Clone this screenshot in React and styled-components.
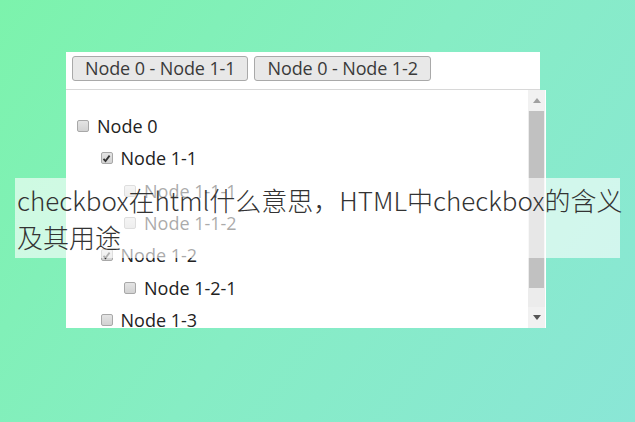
import React from 'react'
import styled, { createGlobalStyle } from 'styled-components'

const GlobalStyle = createGlobalStyle`
  html, body {
    margin: 0;
    padding: 0;
  }
  body {
    width: 635px;
    height: 422px;
    overflow: hidden;
    background: linear-gradient(125deg, #7cf3ac 0%, #86edc4 50%, #8ae6d6 100%);
    font-family: "Open Sans", "Noto Sans", sans-serif;
  }
`

const Page = styled.div`
  position: relative;
  height: 422px;
  padding: 52px 0 0 66px;
  box-sizing: border-box;
`

const Panel = styled.div`
  display: flex;
  flex-direction: column;
  width: 480px;
`

const TagBar = styled.div`
  display: flex;
  align-items: center;
  gap: 6px;
  width: 474px;
  height: 38px;
  padding: 0 6px;
  box-sizing: border-box;
  background: #fff;
  border-bottom: 1px solid #d8d8d8;
`

const Tag = styled.button`
  height: 25px;
  padding: 0 12px;
  margin-top: -4px;
  font-family: "Open Sans", "Noto Sans", sans-serif;
  font-size: 18px;
  color: #3a3a3a;
  background: #e8e8e8;
  border: 1px solid #a9a9a9;
  border-radius: 3px;
  line-height: 23px;
  letter-spacing: -0.1px;
`

const ListBox = styled.div`
  display: flex;
  height: 238px;
  background: #fff;
  overflow: hidden;
`

const Tree = styled.ul`
  flex: 1;
  list-style: none;
  margin: 0;
  padding: 20px 0 0 0;
`

const Row = styled.li`
  display: flex;
  align-items: center;
  height: 32.3px;
  padding-left: ${p => 11 + p.$level * 23.5}px;
  font-size: 18px;
  color: #222;
`

const Box = styled.span`
  display: inline-flex;
  align-items: center;
  justify-content: center;
  width: 10px;
  height: 10px;
  margin-right: 8px;
  border: 1px solid #a8a8a8;
  border-radius: 2px;
  background: linear-gradient(#e4e4e4, #d2d2d2);
`

const Scrollbar = styled.div`
  display: flex;
  flex-direction: column;
  width: 17px;
  margin-right: 1px;
  background: #ececec;
`

const Arrow = styled.div`
  display: flex;
  align-items: center;
  justify-content: center;
  height: 21px;
  background: #f1f1f1;
`

const Thumb = styled.div`
  height: 177px;
  margin: 0 1px;
  background: #c1c1c1;
`

const Track = styled.div`
  flex: 1;
`

const Caption = styled.div`
  position: absolute;
  left: 15px;
  top: 178px;
  width: 605px;
  height: 80px;
  padding: 3px 2px;
  box-sizing: border-box;
  background: rgba(255, 255, 255, 0.62);
  font-family: "Noto Sans CJK SC", "Noto Sans", sans-serif;
  font-size: 26px;
  font-weight: 300;
  line-height: 37px;
  color: #333;
  letter-spacing: 0;
  white-space: nowrap;
`

const nodes = [
  { label: 'Node 0', level: 0 },
  { label: 'Node 1-1', level: 1, checked: true },
  { label: 'Node 1-1-1', level: 2 },
  { label: 'Node 1-1-2', level: 2 },
  { label: 'Node 1-2', level: 1, checked: true },
  { label: 'Node 1-2-1', level: 2 },
  { label: 'Node 1-3', level: 1 }
]

function Checkbox({ checked }) {
  return (
    <Box>
      {checked && (
        <svg width="9" height="9" viewBox="0 0 9 9">
          <path d="M1.5 4.8 L3.5 7 L7.6 1.6" fill="none" stroke="#333" strokeWidth="1.8" />
        </svg>
      )}
    </Box>
  )
}

export default function App() {
  return (
    <>
      <GlobalStyle />
      <Page>
        <Panel>
          <TagBar>
            <Tag>Node 0 - Node 1-1</Tag>
            <Tag>Node 0 - Node 1-2</Tag>
          </TagBar>
          <ListBox>
            <Tree>
              {nodes.map(n => (
                <Row key={n.label} $level={n.level}>
                  <Checkbox checked={n.checked} />
                  {n.label}
                </Row>
              ))}
            </Tree>
            <Scrollbar>
              <Arrow>
                <svg width="8" height="5" viewBox="0 0 8 5"><path d="M0 5 L4 0 L8 5 Z" fill="#a0a0a0" /></svg>
              </Arrow>
              <Thumb />
              <Track />
              <Arrow>
                <svg width="8" height="5" viewBox="0 0 8 5"><path d="M0 0 L8 0 L4 5 Z" fill="#555" /></svg>
              </Arrow>
            </Scrollbar>
          </ListBox>
        </Panel>
        <Caption>
          checkbox在html什么意思，HTML中checkbox的含义
          <br />
          及其用途
        </Caption>
      </Page>
    </>
  )
}
